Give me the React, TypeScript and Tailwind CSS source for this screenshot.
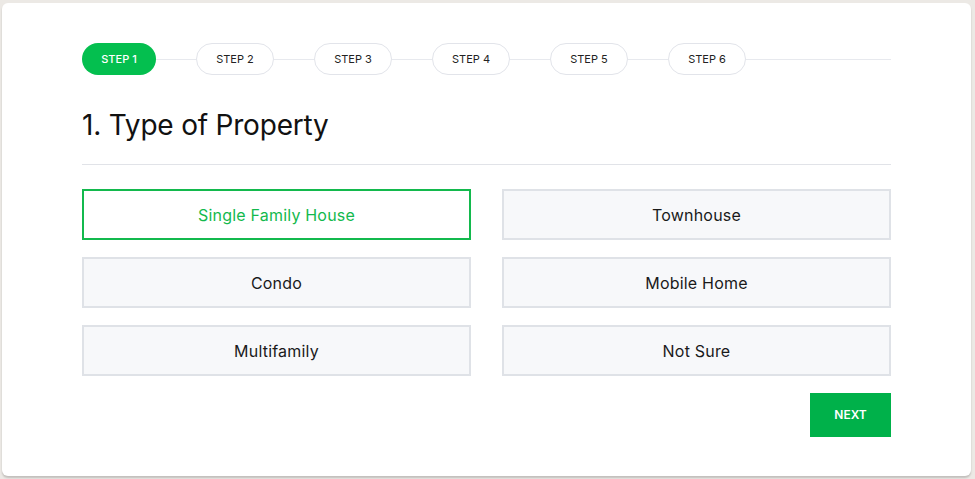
import React from "react";

const steps = ["STEP 1", "STEP 2", "STEP 3", "STEP 4", "STEP 5", "STEP 6"];
const options = ["Single Family House", "Townhouse", "Condo", "Mobile Home", "Multifamily", "Not Sure"];

export default function App() {
  const active = 0;
  const selected = "Single Family House";

  return (
    <div className="h-[479px] w-[975px] bg-[#ece9e5] pt-[3px] pl-[2px] font-['Inter',sans-serif]">
      <div className="h-[473px] w-[969px] rounded-md bg-white px-[80px] pt-[40px] shadow-[0_2px_2px_rgba(0,0,0,0.18)]">
        <div className="flex items-center">
          {steps.map((s, i) => (
            <React.Fragment key={s}>
              <div
                className={
                  i === active
                    ? "flex h-8 w-[74px] items-center justify-center rounded-full bg-[#04bf4f] text-[11px] font-medium text-white"
                    : "flex h-8 w-[78px] items-center justify-center rounded-full border border-[#e2e4ea] bg-white text-[11px] text-[#222]"
                }
              >
                {s}
              </div>
              <div className={i === steps.length - 1 ? "h-px flex-1 bg-[#e7e9ee]" : "h-px w-[40px] bg-[#e7e9ee]"} />
            </React.Fragment>
          ))}
        </div>

        <h1 className="mt-[32px] text-[28px] leading-[36px] tracking-[-0.2px] text-[#111]">1. Type of Property</h1>
        <div className="mt-[21px] h-px bg-[#e1e3e8]" />

        <div className="mt-[24px] grid grid-cols-2 gap-x-[31px] gap-y-[17px]">
          {options.map((o) => (
            <button
              key={o}
              className={
                o === selected
                  ? "h-[51px] border-2 border-[#13b94d] bg-white text-[16px] tracking-[0.2px] text-[#13b94d]"
                  : "h-[51px] border-2 border-[#dfe2e7] bg-[#f7f8fa] text-[16px] tracking-[0.2px] text-[#1a1a1a]"
              }
            >
              {o}
            </button>
          ))}
        </div>

        <div className="mt-[17px] flex justify-end">
          <button className="h-[44px] w-[81px] bg-[#00b14a] text-[12px] font-semibold text-white">NEXT</button>
        </div>
      </div>
    </div>
  );
}
